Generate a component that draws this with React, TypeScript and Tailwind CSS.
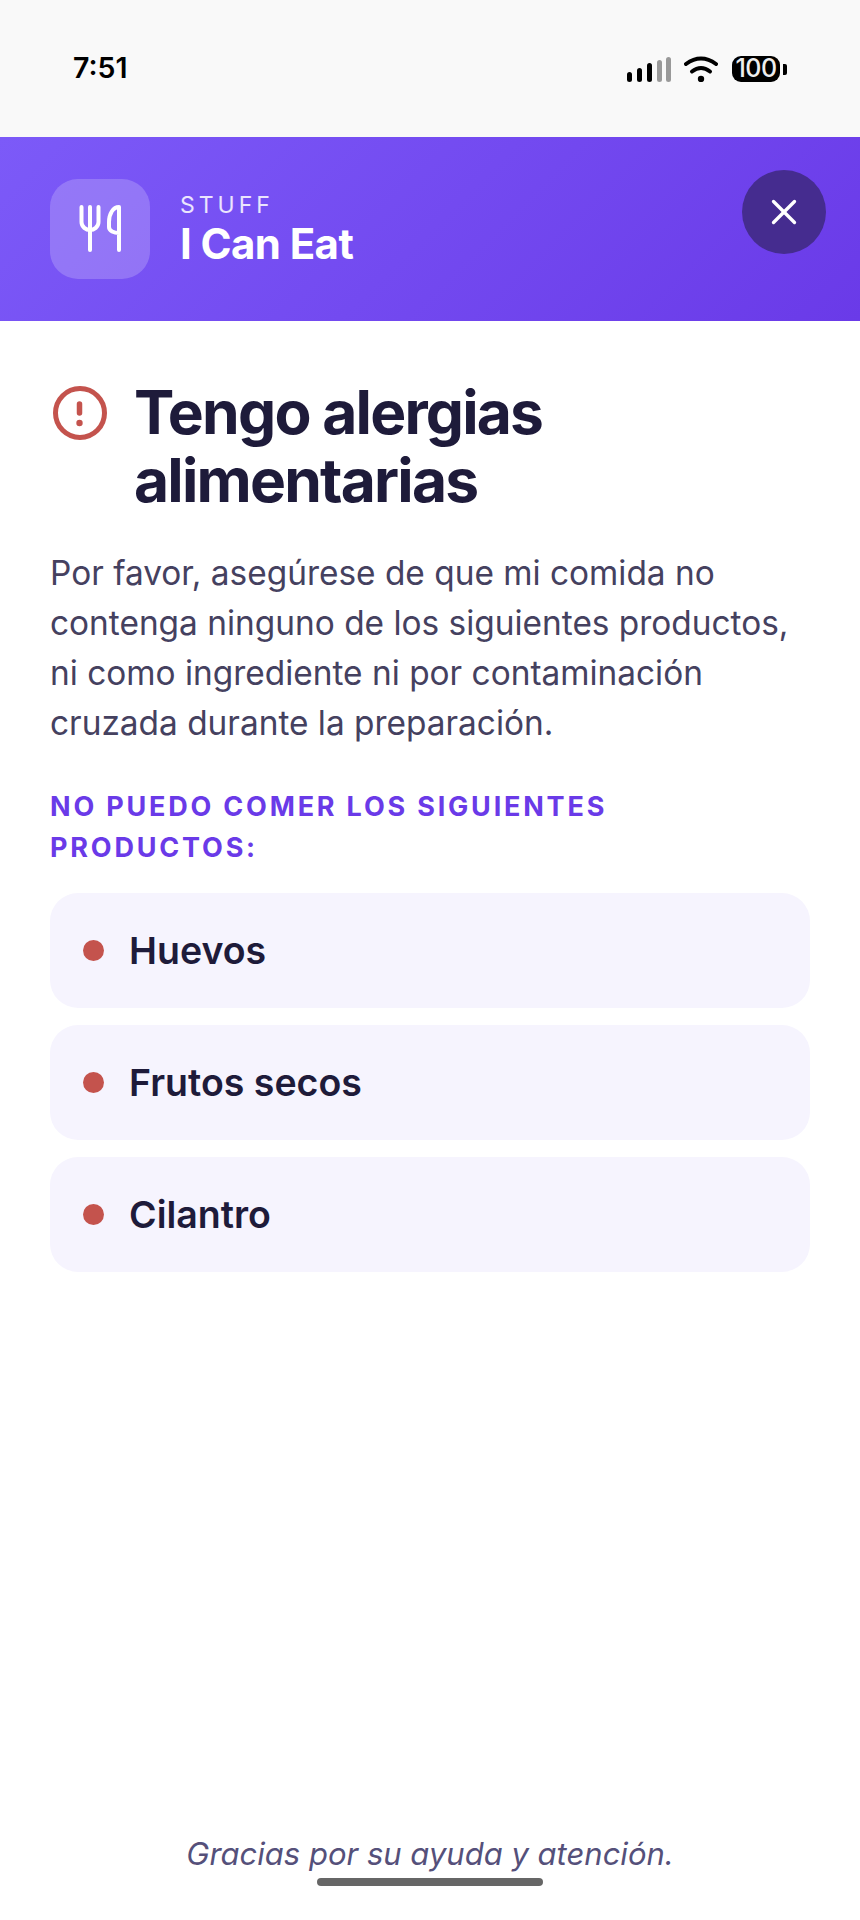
import { X } from "lucide-react";

const items = ["Huevos", "Frutos secos", "Cilantro"];

function StatusIcons() {
  return (
    <div className="flex items-center">
      <svg width="44" height="26" viewBox="0 0 44 26">
        <rect x="0" y="16" width="5" height="10" rx="2.5" fill="#000" />
        <rect x="10" y="12" width="5" height="14" rx="2.5" fill="#000" />
        <rect x="20" y="7" width="5" height="19" rx="2.5" fill="#000" />
        <rect x="30" y="4" width="5" height="22" rx="2.5" fill="#999" />
        <rect x="39" y="1" width="5" height="25" rx="2.5" fill="#999" />
      </svg>
      <svg className="ml-[13px]" width="34" height="26" viewBox="0 0 34 26" fill="none" stroke="#000" strokeWidth="4" strokeLinecap="round">
        <path d="M2 8Q17 -3 32 8" />
        <path d="M8 15.5Q17 8.5 26 15.5" />
        <circle cx="17" cy="23" r="3.2" fill="#000" stroke="none" />
      </svg>
      <div className="ml-[14px] flex items-center gap-[3px]">
        <div className="flex h-[26px] w-[48px] items-center justify-center rounded-[9px] bg-black text-[25px] font-medium tracking-[-0.5px] text-[#eee]">
          100
        </div>
        <div className="h-[11px] w-[4px] rounded-r-[2px] bg-black" />
      </div>
    </div>
  );
}

export default function App() {
  return (
    <div className="flex h-[1920px] w-[860px] flex-col overflow-hidden bg-white font-['Inter',sans-serif]">
      <div className="flex h-[137px] items-start justify-between bg-[#f9f9f9] pl-[73px] pr-[73px] pt-[50px]">
        <div className="text-[28.5px] font-semibold leading-[36px] text-black">7:51</div>
        <div className="pt-[6px]">
          <StatusIcons />
        </div>
      </div>

      <div className="relative flex h-[184px] items-center gap-[30px] bg-[linear-gradient(135deg,#7c5af8,#6a3ae8)] pl-[50px]">
        <div className="flex h-[100px] w-[100px] items-center justify-center rounded-[28px] bg-white/20">
          <svg width="44" height="50" viewBox="0 0 44 50" fill="none" stroke="#fff" strokeWidth="4" strokeLinecap="round" strokeLinejoin="round">
            <path d="M3.5 3V18C3.5 23 8 26 12 26C16 26 20.5 23 20.5 18V3" />
            <path d="M12 3V46" />
            <path d="M41 46V3C35 3 31 10 31 18V23C31 27 36 29 41 29" />
          </svg>
        </div>
        <div className="flex flex-col pt-[1px]">
          <div className="text-[23px] font-normal leading-[28px] tracking-[4px] text-white/85">STUFF</div>
          <div className="text-[42px] font-bold leading-[50px] tracking-[-0.6px] text-white">I Can Eat</div>
        </div>
        <button className="absolute left-[742px] top-[33px] flex h-[84px] w-[84px] items-center justify-center rounded-full bg-[#452c8f] text-white">
          <X size={42} strokeWidth={1.9} />
        </button>
      </div>

      <div className="flex flex-1 flex-col px-[50px] pt-[57px]">
        <div className="flex items-start gap-[27px] pl-[3px]">
          <svg className="mt-[8px] shrink-0" width="54" height="54" viewBox="0 0 54 54" fill="none" stroke="#c4534d" strokeWidth="5" strokeLinecap="round">
            <circle cx="27" cy="27" r="24.5" />
            <path d="M26.5 18V27" strokeWidth="5.5" />
            <circle cx="26.5" cy="37" r="3.2" fill="#c4534d" stroke="none" />
          </svg>
          <h1 className="text-[60.5px] font-bold leading-[68px] tracking-[-1.8px] text-[#1e1b3a]">
            Tengo alergias
            <br />
            alimentarias
          </h1>
        </div>

        <p className="mt-[34px] text-[33.4px] leading-[50px] text-[#45415f]">
          Por favor, asegúrese de que mi comida no contenga ninguno de los siguientes productos, ni como ingrediente ni por contaminación cruzada durante la preparación.
        </p>

        <div className="mt-[38px] text-[27px] font-bold leading-[41px] tracking-[2.8px] text-[#6a3ae8]">
          NO PUEDO COMER LOS SIGUIENTES PRODUCTOS:
        </div>

        <div className="mt-[25px] flex flex-col gap-[17px]">
          {items.map((item) => (
            <div key={item} className="flex h-[115px] items-center gap-[25px] rounded-[28px] bg-[#f6f4fe] pl-[33px]">
              <div className="h-[21px] w-[21px] rounded-full bg-[#c4534d]" />
              <div className="text-[37.5px] font-semibold leading-[45px] text-[#1e1b3a]">{item}</div>
            </div>
          ))}
        </div>

        <div className="mt-auto pb-[46px] text-center text-[31px] italic leading-[40px] text-[#55507a]">
          Gracias por su ayuda y atención.
        </div>
      </div>

      <div className="absolute left-[317px] top-[1878px] h-[8px] w-[226px] rounded-full bg-[#666]" />
    </div>
  );
}
